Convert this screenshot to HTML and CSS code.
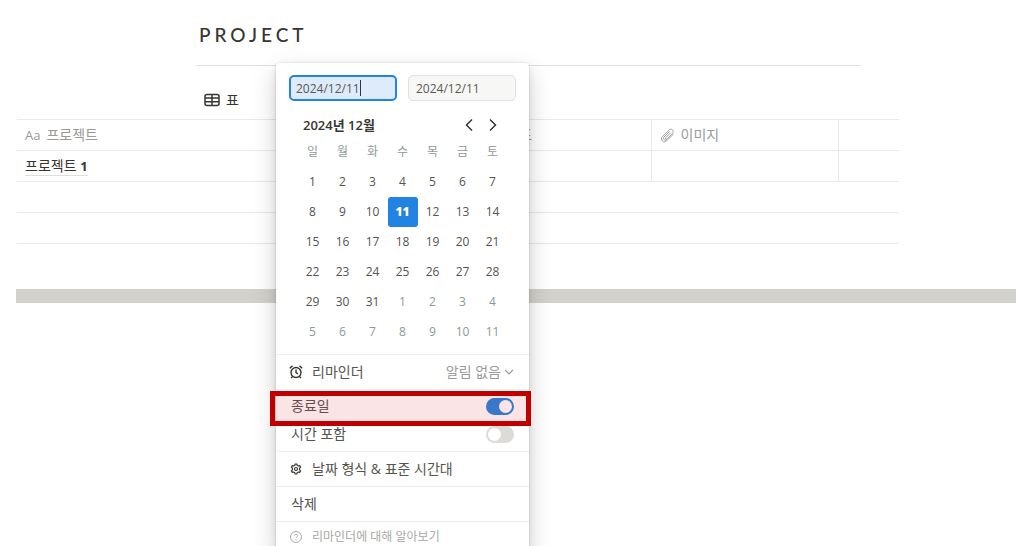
FILE: index.html
```html
<!DOCTYPE html>
<html lang="ko">
  <head>
    <meta charset="UTF-8" />
    <meta name="viewport" content="width=device-width, initial-scale=1.0" />
    <title>PROJECT</title>
    <link rel="stylesheet" href="styles.css">
  </head>
  <body>
    <main class="page">
      <header class="page-header">
        <h1>PROJECT</h1>
      </header>

      <nav class="views">
        <button type="button" class="view-tab">
          <svg width="16" height="14" viewBox="0 0 16 14" fill="none" stroke="currentColor" stroke-width="1.5">
            <rect x="1" y="1.5" width="14" height="11" rx="2" />
            <path d="M1 5h14M1 8.7h14M8 1.5v11" />
          </svg>
          표
        </button>
      </nav>

      <table class="database">
        <colgroup>
          <col class="col-name" />
          <col class="col-prop" />
          <col class="col-prop" />
          <col class="col-prop" />
          <col />
        </colgroup>
        <thead>
          <tr>
            <th><span class="prop"><span class="prop-aa">Aa</span>프로젝트</span></th>
            <th></th>
            <th>
              <span class="prop">
                <svg width="15" height="15" viewBox="0 0 16 16" fill="none" stroke="currentColor" stroke-width="1.3">
                  <path d="M2 4h12M2 8h12M2 12h8" />
                </svg>
                중요도
              </span>
            </th>
            <th>
              <span class="prop">
                <svg width="15" height="15" viewBox="0 0 16 16" fill="none" stroke="currentColor" stroke-width="1" stroke-linecap="round">
                  <path d="M11.2 5.2 5.9 10.5c-.9.9.4 2.2 1.3 1.3l6-6c2.6-2.6-1-6.2-3.6-3.600L2.700 9.100c-3.300 3.300 1.200 7.800 4.500 4.500l7-7M9.900 4 4.300 9.600c-2 2 .8 4.800 2.800 2.800" />
                </svg>
                이미지
              </span>
            </th>
            <th></th>
          </tr>
        </thead>
        <tbody>
          <tr>
            <td><a class="row-title" href="#">프로젝트 <b>1</b></a></td>
            <td></td>
            <td></td>
            <td></td>
            <td></td>
          </tr>
          <tr><td colspan="5"></td></tr>
          <tr><td colspan="5"></td></tr>
        </tbody>
      </table>

      <div class="scrollbar"></div>

      <!-- date picker -->
      <section class="date-picker">
        <div class="picker-top">
          <div class="date-fields">
            <div class="field active"><input type="text" aria-label="시작일" value="2024/12/11" /></div>
            <div class="field"><input type="text" aria-label="종료일" value="2024/12/11" /></div>
          </div>

          <div class="month-bar">
            <h2>2024년 12월</h2>
            <button type="button" aria-label="이전 달">
              <svg width="14" height="14" viewBox="0 0 14 14" fill="none" stroke="currentColor" stroke-width="1.5"><path d="M10 1.5 4.5 7l5.5 5.5" /></svg>
            </button>
            <button type="button" aria-label="다음 달">
              <svg width="14" height="14" viewBox="0 0 14 14" fill="none" stroke="currentColor" stroke-width="1.5"><path d="M4 1.5 9.5 7 4 12.5" /></svg>
            </button>
          </div>

          <table class="calendar">
            <thead>
              <tr><th>일</th><th>월</th><th>화</th><th>수</th><th>목</th><th>금</th><th>토</th></tr>
            </thead>
            <tbody>
              <tr><td>1</td><td>2</td><td>3</td><td>4</td><td>5</td><td>6</td><td>7</td></tr>
              <tr><td>8</td><td>9</td><td>10</td><td class="selected">11</td><td>12</td><td>13</td><td>14</td></tr>
              <tr><td>15</td><td>16</td><td>17</td><td>18</td><td>19</td><td>20</td><td>21</td></tr>
              <tr><td>22</td><td>23</td><td>24</td><td>25</td><td>26</td><td>27</td><td>28</td></tr>
              <tr><td>29</td><td>30</td><td>31</td><td class="next">1</td><td class="next">2</td><td class="next">3</td><td class="next">4</td></tr>
              <tr class="next"><td>5</td><td>6</td><td>7</td><td>8</td><td>9</td><td>10</td><td>11</td></tr>
            </tbody>
          </table>
        </div>

        <div class="group">
          <button type="button" class="item">
            <svg class="item-icon" width="14" height="14" viewBox="0 0 14 14" fill="none" stroke="currentColor" stroke-width="1.4">
              <circle cx="7" cy="7.5" r="5" />
              <path d="M7 4.5v3.200l2 1.200M.8 3.200 3.500.9M13.200 3.200 10.500.9M3.600 11.300l-1.400 1.900M10.400 11.300l1.400 1.900" />
            </svg>
            리마인더
            <span class="item-value">
              알림 없음
              <svg width="10" height="10" viewBox="0 0 10 10" fill="none" stroke="currentColor" stroke-width="1.1"><path d="M1 3l4 4 4-4" /></svg>
            </span>
          </button>
        </div>

        <div class="group switches">
          <div class="item highlighted">
            <label for="endDate">종료일</label>
            <input type="checkbox" class="switch" id="endDate" checked />
          </div>
          <div class="item">
            <label for="includeTime">시간 포함</label>
            <input type="checkbox" class="switch" id="includeTime" />
          </div>
        </div>

        <div class="group">
          <button type="button" class="item">
            <svg class="item-icon" width="14" height="14" viewBox="0 0 14 14" fill="none" stroke="currentColor" stroke-width="1.2" stroke-linejoin="round">
              <path d="M6.200 2h1.600l.4 1.300 1.200.7 1.400-.3.8 1.400-1 1v1.800l1 1-.8 1.400-1.400-.3-1.200.7-.4 1.300H6.200l-.4-1.300-1.200-.7-1.400.3-.8-1.400 1-1V6.100l-1-1 .8-1.400 1.400.3 1.200-.7z" />
              <circle cx="7" cy="7" r="1.5" />
            </svg>
            날짜 형식 &amp; 표준 시간대
          </button>
        </div>

        <div class="group">
          <button type="button" class="item">삭제</button>
        </div>

        <div class="group">
          <a class="item help" href="#">
            <svg class="item-icon" width="14" height="14" viewBox="0 0 14 14" fill="none" stroke="currentColor" stroke-width="1">
              <circle cx="7" cy="7" r="5.5" />
              <path d="M5.400 5.800c0-2 3.200-2 3.200 0 0 1.100-1.600 1.200-1.600 2.300M7 9.200v1.100" />
            </svg>
            리마인더에 대해 알아보기
          </a>
        </div>
      </section>
    </main>
  </body>
</html>
```
FILE: styles.css
```css
*,
*::before,
*::after {
  box-sizing: border-box;
}
body {
  margin: 0;
  background-color: #ffffff;
  color: #37352f;
  font-family: "Open Sans", "Noto Sans CJK KR", sans-serif;
  font-size: 14px;
  line-height: 20px;
}
button {
  padding: 0;
  border: none;
  background: none;
  color: inherit;
  font: inherit;
  cursor: pointer;
}
a {
  color: inherit;
  text-decoration: none;
}
svg {
  flex: none;
}
.page {
  position: relative;
  height: 100vh;
  overflow: hidden;
}

/* page title */
.page-header {
  margin: 0 155px 0 197px;
  padding: 22px 2px 17px;
  border-bottom: 1px solid #dfdfde;
}
h1 {
  margin: 0;
  font-family: Lato, sans-serif;
  font-size: 19px;
  font-weight: 500;
  line-height: 26px;
  letter-spacing: 4px;
}
.views {
  margin-left: 204px;
  padding: 24px 0 9px;
}
.view-tab {
  display: flex;
  align-items: center;
  gap: 6px;
}

/* database table */
.database {
  width: calc(100% - 134px);
  margin-left: 17px;
  border-collapse: collapse;
  table-layout: fixed;
  border-top: 1px solid #e9e9e7;
}
.col-name {
  width: 260px;
}
.col-prop {
  width: 187px;
}
.database th,
.database td {
  height: 31px;
  padding: 0 8px;
  border-bottom: 1px solid #e9e9e7;
  text-align: left;
}
.database th {
  color: #9b9a97;
  font-weight: 400;
}
.database th + th,
.database td + td {
  border-left: 1px solid #e9e9e7;
}
.prop {
  display: flex;
  align-items: center;
  gap: 6px;
}
.prop-aa {
  font-size: 13px;
}
.row-title {
  border-bottom: 1px solid #dededc;
}
.row-title b {
  font-size: 13px;
}
.scrollbar {
  height: 14px;
  margin: 45px 0 0 16px;
  background-color: #d3d1cb;
}

/* date picker */
.date-picker {
  position: absolute;
  top: 63px;
  left: 276px;
  width: 253px;
  background-color: #ffffff;
  border-radius: 4px;
  box-shadow: 0 0 0 1px rgba(15, 15, 15, 0.05), 0 3px 6px rgba(15, 15, 15, 0.1),
    0 9px 24px rgba(15, 15, 15, 0.2);
}
.picker-top {
  padding: 12px 13px 7px;
}
.date-fields {
  display: flex;
  gap: 11px;
}
.field {
  position: relative;
  flex: 1;
}
.field input {
  display: block;
  width: 100%;
  height: 26px;
  padding: 0 7px;
  border: 1px solid #e0e0de;
  border-radius: 5px;
  background-color: #f7f7f5;
  color: #5a5854;
  font: inherit;
  font-size: 12px;
}
.field.active input {
  padding: 0 5px;
  border: 2px solid #2383e2;
  background-color: #deebfa;
}
/* text cursor */
.field.active::after {
  content: "";
  position: absolute;
  top: 5px;
  left: 71px;
  width: 1px;
  height: 16px;
  background-color: #37352f;
}
.month-bar {
  display: flex;
  align-items: center;
  gap: 10px;
  height: 24px;
  margin-top: 12px;
  padding: 0 16px 0 14px;
}
.month-bar h2 {
  flex: 1;
  margin: 0;
  font-size: 13px;
  font-weight: 600;
}
.month-bar button {
  display: flex;
}
.calendar {
  width: 210px;
  margin: 0 auto;
  border-collapse: collapse;
  table-layout: fixed;
  color: #55534e;
  font-size: 12px;
  text-align: center;
}
.calendar th,
.calendar td {
  height: 30px;
  padding: 0;
}
.calendar th {
  color: #8e9a98;
  font-weight: 400;
}
.calendar .next {
  color: #8b9a97;
}
.calendar .selected {
  border-radius: 3px;
  background-color: #2383e2;
  color: #ffffff;
  font-weight: 800;
}
.group {
  border-top: 1px solid #ededec;
}
.item {
  display: flex;
  align-items: center;
  width: 100%;
  height: 34px;
  padding: 0 15px;
  color: #55534e;
}
.item-icon {
  margin: 0 9px 0 -2px;
  color: #37352f;
}
.item-value {
  display: flex;
  align-items: center;
  gap: 3px;
  margin-left: auto;
  color: #9b9a97;
}
.switches {
  padding: 2px 0 3px;
}
.switches .item {
  position: relative;
  justify-content: space-between;
  height: 28px;
}
.switch {
  width: 28px;
  height: 17px;
  margin: 0;
  padding: 2px;
  border-radius: 9px;
  background-color: #dcdbd8;
  appearance: none;
}
.switch::before {
  content: "";
  display: block;
  width: 13px;
  height: 13px;
  border-radius: 50%;
  background-color: #ffffff;
}
.switch:checked {
  background-color: #2383e2;
}
.switch:checked::before {
  margin-left: auto;
}
/* red marker over the end date row */
.highlighted::after {
  content: "";
  position: absolute;
  top: -1px;
  left: -6px;
  right: -2px;
  height: 35px;
  border: 5px solid #c00000;
  background-color: rgba(220, 30, 40, 0.12);
  pointer-events: none;
  z-index: 1;
}
.help,
.help .item-icon {
  color: #a9a8a5;
}
.help {
  height: 30px;
  font-size: 12px;
}
```
